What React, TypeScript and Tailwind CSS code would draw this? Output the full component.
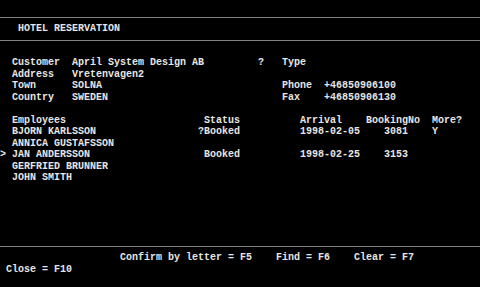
type Seg = [number, string];

// place text segments at fixed columns of an 80-col terminal row
const at = (segs: Seg[]) => {
  let s = "";
  for (const [col, text] of segs) {
    s = s.padEnd(col, " ") + text;
  }
  return s;
};

type Row = string | "---";

const rows: Row[] = [
  "",
  "---",
  at([[3, "HOTEL RESERVATION"]]),
  "---",
  "",
  at([[2, "Customer"], [12, "April System Design AB"], [43, "?"], [47, "Type"]]),
  at([[2, "Address"], [12, "Vretenvagen2"]]),
  at([[2, "Town"], [12, "SOLNA"], [47, "Phone"], [54, "+46850906100"]]),
  at([[2, "Country"], [12, "SWEDEN"], [47, "Fax"], [54, "+46850906130"]]),
  "",
  at([[2, "Employees"], [34, "Status"], [50, "Arrival"], [61, "BookingNo"], [72, "More?"]]),
  at([[2, "BJORN KARLSSON"], [33, "?Booked"], [50, "1998-02-05"], [64, "3081"], [72, "Y"]]),
  at([[2, "ANNICA GUSTAFSSON"]]),
  at([[0, ">"], [2, "JAN ANDERSSON"], [34, "Booked"], [50, "1998-02-25"], [64, "3153"]]),
  at([[2, "GERFRIED BRUNNER"]]),
  at([[2, "JOHN SMITH"]]),
  "",
  "",
  "",
  "",
  "",
  "---",
  at([[20, "Confirm by letter = F5"], [46, "Find = F6"], [59, "Clear = F7"]]),
  at([[1, "Close = F10"]]),
  "",
];

export default function App() {
  return (
    <div className="flex h-[287px] w-[480px] flex-col overflow-hidden bg-black font-['Liberation_Mono','Courier_New',monospace] text-[10px] font-bold text-[#e6e6e6]">
      {rows.map((r, i) =>
        r === "---" ? (
          <div key={i} className="flex h-[11.48px] shrink-0 items-center">
            <div className="h-px w-full bg-[#808080]" />
          </div>
        ) : (
          <div key={i} className="h-[11.48px] shrink-0 whitespace-pre leading-[11.48px]">
            {r}
          </div>
        )
      )}
    </div>
  );
}
